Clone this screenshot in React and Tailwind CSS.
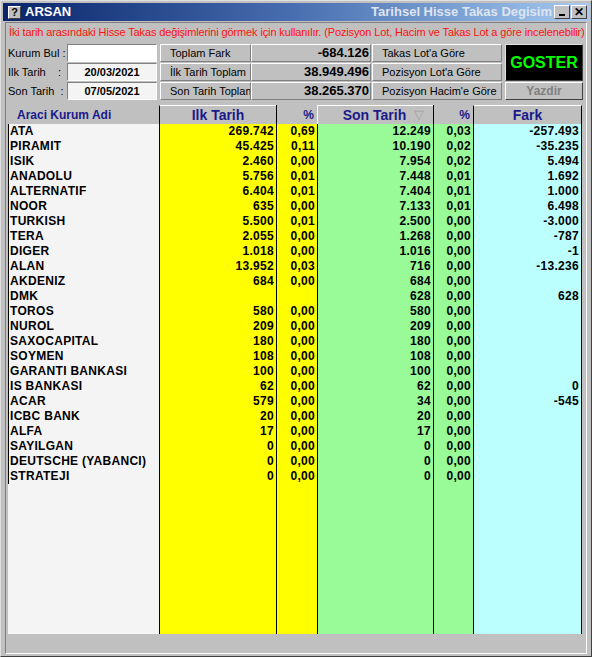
import React from "react";

const rows = [
  ["ATA", "269.742", "0,69", "12.249", "0,03", "-257.493"],
  ["PIRAMIT", "45.425", "0,11", "10.190", "0,02", "-35.235"],
  ["ISIK", "2.460", "0,00", "7.954", "0,02", "5.494"],
  ["ANADOLU", "5.756", "0,01", "7.448", "0,01", "1.692"],
  ["ALTERNATIF", "6.404", "0,01", "7.404", "0,01", "1.000"],
  ["NOOR", "635", "0,00", "7.133", "0,01", "6.498"],
  ["TURKISH", "5.500", "0,01", "2.500", "0,00", "-3.000"],
  ["TERA", "2.055", "0,00", "1.268", "0,00", "-787"],
  ["DIGER", "1.018", "0,00", "1.016", "0,00", "-1"],
  ["ALAN", "13.952", "0,03", "716", "0,00", "-13.236"],
  ["AKDENIZ", "684", "0,00", "684", "0,00", ""],
  ["DMK", "", "", "628", "0,00", "628"],
  ["TOROS", "580", "0,00", "580", "0,00", ""],
  ["NUROL", "209", "0,00", "209", "0,00", ""],
  ["SAXOCAPITAL", "180", "0,00", "180", "0,00", ""],
  ["SOYMEN", "108", "0,00", "108", "0,00", ""],
  ["GARANTI BANKASI", "100", "0,00", "100", "0,00", ""],
  ["IS BANKASI", "62", "0,00", "62", "0,00", "0"],
  ["ACAR", "579", "0,00", "34", "0,00", "-545"],
  ["ICBC BANK", "20", "0,00", "20", "0,00", ""],
  ["ALFA", "17", "0,00", "17", "0,00", ""],
  ["SAYILGAN", "0", "0,00", "0", "0,00", ""],
  ["DEUTSCHE (YABANCI)", "0", "0,00", "0", "0,00", ""],
  ["STRATEJI", "0", "0,00", "0", "0,00", ""],
];

const cols = [
  { w: "w-[151px]", bg: "bg-[#f4f4f4]", line: "" },
  { w: "w-[117px]", bg: "bg-[#ffff00]", line: "border-l border-black" },
  { w: "w-[41px]", bg: "bg-[#ffff00]", line: "border-l border-black" },
  { w: "w-[116px]", bg: "bg-[#99fa98]", line: "border-l border-black" },
  { w: "w-[40px]", bg: "bg-[#99fa98]", line: "border-l border-black" },
  { w: "w-[109px]", bg: "bg-[#bbffff]", line: "border-l border-r border-black" },
];

const raised = "border border-t-white border-l-white border-r-[#808080] border-b-[#808080]";
const sunken = "border border-t-[#808080] border-l-[#808080] border-r-white border-b-white";

function Btn({ children, className }) {
  return (
    <div className={`h-[18px] flex items-center bg-[#c0c0c0] ${raised} ${className}`}>
      {children}
    </div>
  );
}

export default function App() {
  return (
    <div
      className="w-[592px] h-[657px] bg-[#c0c0c0] border border-t-[#e0e0e0] border-l-[#e0e0e0] border-r-[#404040] border-b-[#404040] p-[2px] flex flex-col text-black"
      style={{ fontFamily: '"Liberation Sans", Arial, sans-serif' }}
    >
      {/* title bar */}
      <div className="h-[18px] flex items-center bg-gradient-to-r from-[#0a246a] via-[#4a6fb0] to-[#a6caf0] pl-[5px] pr-[2px]">
        <div className="w-[13px] h-[13px] bg-[#c0c0c0] border border-t-white border-l-white border-r-[#404040] border-b-[#404040] flex items-center justify-center text-[11px] font-bold leading-none">
          ?
        </div>
        <div className="ml-[4px] text-white text-[13px] font-bold">ARSAN</div>
        <div className="flex-1 text-right pr-[2px] text-[13px] font-bold text-[#dfe4ee] overflow-hidden whitespace-nowrap">
          Tarihsel Hisse Takas Degisim
        </div>
        <div className="w-[16px] h-[14px] bg-[#c0c0c0] border border-t-white border-l-white border-r-[#404040] border-b-[#404040] flex items-end justify-center pb-[2px]">
          <div className="w-[6px] h-[2px] bg-black" />
        </div>
        <div className="w-[16px] h-[14px] ml-[1px] bg-[#c0c0c0] border border-t-white border-l-white border-r-[#404040] border-b-[#404040] flex items-center justify-center text-[12px] font-bold leading-none">
          ✕
        </div>
      </div>

      {/* inner frame */}
      <div className="mt-[1px] mx-[2px] flex-1 flex flex-col border border-t-[#808080] border-l-[#808080] border-r-white border-b-white px-[2px]">
        <div className="h-[18px] flex items-center pl-[1px] text-[11px] tracking-[-0.13px] text-[#ff1010] whitespace-nowrap">
          İki tarih arasındaki Hisse Takas değişimlerini görmek için kullanılır. (Pozisyon Lot, Hacim ve Takas Lot a göre incelenebilir)
        </div>

        <div className="mt-[3px] flex text-[11px]">
          <div className="flex flex-col gap-[1px] w-[59px]">
            <div className="h-[18px] flex items-center">Kurum Bul :</div>
            <div className="h-[18px] flex items-center">Ilk Tarih&nbsp;&nbsp;&nbsp;&nbsp;:</div>
            <div className="h-[18px] flex items-center">Son Tarih&nbsp;&nbsp;:</div>
          </div>
          <div className="flex flex-col gap-[1px] w-[90px]">
            <div className={`h-[18px] bg-white ${sunken}`} />
            <div className={`h-[18px] bg-[#f4f4f4] ${sunken} flex items-center justify-center font-bold`}>20/03/2021</div>
            <div className={`h-[18px] bg-[#f4f4f4] ${sunken} flex items-center justify-center font-bold`}>07/05/2021</div>
          </div>
          <div className="ml-[3px] flex flex-col gap-[1px] w-[91px]">
            <Btn className="pl-[9px]">Toplam Fark</Btn>
            <Btn className="pl-[9px]">İlk Tarih Toplam</Btn>
            <Btn className="pl-[9px] overflow-hidden whitespace-nowrap">Son Tarih Toplam</Btn>
          </div>
          <div className="flex flex-col gap-[1px] w-[120px]">
            <Btn className="justify-end pr-[1px] text-[13px] font-bold">-684.126</Btn>
            <Btn className="justify-end pr-[1px] text-[13px] font-bold">38.949.496</Btn>
            <Btn className="justify-end pr-[1px] text-[13px] font-bold">38.265.370</Btn>
          </div>
          <div className="ml-[1px] flex flex-col gap-[1px] w-[130px]">
            <Btn className="pl-[9px]">Takas Lot'a Göre</Btn>
            <Btn className="pl-[9px]">Pozisyon Lot'a Göre</Btn>
            <Btn className="pl-[9px]">Pozisyon Hacim'e Göre</Btn>
          </div>
          <div className="ml-[3px] flex flex-col gap-[1px] w-[78px]">
            <div className="h-[37px] bg-black border border-t-[#e0e0e0] border-l-[#e0e0e0] border-r-[#404040] border-b-[#404040] flex items-center justify-center text-[16px] font-bold text-[#00ff00]">
              GOSTER
            </div>
            <div className="h-[18px] bg-[#c0c0c0] border border-t-white border-l-white border-r-[#404040] border-b-[#404040] flex items-center justify-center text-[12px] font-bold text-[#808080]">
              Yazdir
            </div>
          </div>
        </div>

        {/* table header */}
        <div className="mt-[5px] w-[574px] h-[19px] flex text-[#1a1a8a] font-bold">
          <div className="w-[151px] flex items-center pl-[9px] text-[12px]">Araci Kurum Adi</div>
          <div className="w-[117px] flex items-center justify-center text-[14px] border-l border-black border-t border-t-white">Ilk Tarih</div>
          <div className="w-[41px] flex items-center justify-end pr-[3px] text-[12px] border-l border-black">%</div>
          <div className="w-[116px] flex items-center justify-center gap-[8px] text-[14px] border-l border-l-white border-t border-t-white">
            <span className="pl-[16px]">Son Tarih</span>
            <span className="text-[#a0a0a0] text-[13px] font-normal">▽</span>
          </div>
          <div className="w-[40px] flex items-center justify-end pr-[3px] text-[12px] border-l border-black">%</div>
          <div className="w-[109px] flex items-center justify-center text-[14px] border-l border-r border-black border-t border-t-white">Fark</div>
        </div>

        {/* table body */}
        <div className="w-[574px] h-[510px] flex text-[12px] font-bold tracking-[0.3px]">
          {cols.map((c, ci) => (
            <div key={ci} className={`${c.w} ${c.bg} ${c.line} flex flex-col`}>
              {rows.map((r, ri) => (
                <div
                  key={ri}
                  className={`h-[15px] leading-[15px] whitespace-nowrap ${
                    ci === 0 ? "pl-[1px] border-l border-black" : "text-right pr-[2px]"
                  }`}
                >
                  {r[ci]}
                </div>
              ))}
            </div>
          ))}
        </div>
      </div>
    </div>
  );
}
